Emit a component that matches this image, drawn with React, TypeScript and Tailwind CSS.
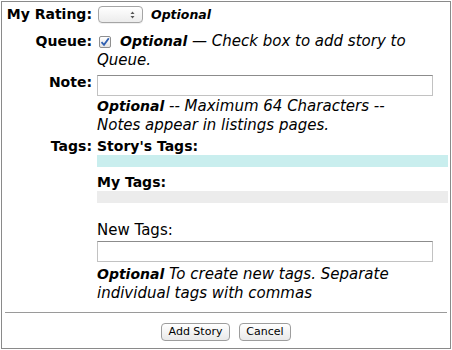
import React from 'react';

const Label: React.FC<{ children: React.ReactNode; className?: string }> = ({ children, className = '' }) => (
  <div className={`w-[90px] shrink-0 text-right text-[14px] font-bold ${className}`}>{children}</div>
);

const Opt: React.FC = () => <span className="text-[14px] font-bold">Optional</span>;

const App: React.FC = () => {
  return (
    <div className="w-[452px] h-[350px] bg-white pl-[1px] pt-[1px] font-['DejaVu_Sans',sans-serif] text-[15px] leading-[19px] text-black">
      <div className="w-[450px] h-[348px] border border-[#8a8a8a]">
        {/* my rating */}
        <div className="flex items-center pt-[3px]">
          <Label>My Rating:</Label>
          <div className="ml-[6px] flex items-center">
            <div className="relative h-[17px] w-[45px] rounded-[4px] border border-[#a5a5a5] bg-gradient-to-b from-white to-[#ececec] shadow-[0_1px_0_rgba(0,0,0,0.06)]">
              <svg className="absolute right-[7px] top-[4px]" width="5" height="8" viewBox="0 0 5 8">
                <path d="M2.5 0.5L4.5 3H0.5z" fill="#555" />
                <path d="M2.5 7.5L4.5 5H0.5z" fill="#555" />
              </svg>
            </div>
            <span className="ml-[8px] text-[12.5px] font-bold italic">Optional</span>
          </div>
        </div>

        {/* queue */}
        <div className="mt-[8px] flex items-start">
          <Label>Queue:</Label>
          <div className="ml-[5px] w-[330px] italic">
            <span className="ml-[2px] mr-[9px] inline-flex h-[12px] w-[12px] items-center justify-center rounded-[2px] border border-[#8f8f8f] bg-gradient-to-b from-white to-[#e4e4e4] align-[-1px]">
              <svg width="10" height="10" viewBox="0 0 10 10">
                <path d="M1.5 5.2L4 7.8L8.8 1.2" fill="none" stroke="#2f5fb0" strokeWidth="1.8" />
              </svg>
            </span>
            <Opt /> — Check box to add story to Queue.
          </div>
        </div>

        {/* note */}
        <div className="mt-[5px] flex items-start">
          <Label className="-mt-[2px]">Note:</Label>
          <div className="ml-[5px]">
            <input
              type="text"
              className="block h-[21px] w-[336px] border border-[#c2c2c2] border-t-[#8c8c8c] bg-white px-1 text-[13px] outline-none"
            />
            <div className="mt-[1px] w-[330px] italic">
              <Opt /> -- Maximum 64 Characters -- Notes appear in listings pages.
            </div>
          </div>
        </div>

        {/* tags */}
        <div className="mt-[3px] flex items-start">
          <Label className="leading-[17px]">Tags:</Label>
          <div className="ml-[5px] mr-[2px] flex-1">
            <div className="text-[14px] font-bold leading-[17px]">Story's Tags:</div>
            <div className="h-[12px] bg-[#c9eeee]" />
            <div className="mt-[7px] text-[14px] font-bold leading-[17px]">My Tags:</div>
            <div className="h-[12px] bg-[#ececec]" />
            <div className="mt-[18px]">New Tags:</div>
            <input
              type="text"
              className="mt-[1px] block h-[21px] w-[336px] border border-[#c2c2c2] border-t-[#8c8c8c] bg-white px-1 text-[13px] outline-none"
            />
            <div className="mt-[3px] w-[330px] italic">
              <Opt /> To create new tags. Separate individual tags with commas
            </div>
          </div>
        </div>

        <div className="mx-[3px] mt-[9px] border-t border-[#9a9a9a]" />

        <div className="mt-[10px] flex justify-center gap-[9px] text-[11px] leading-[16px]">
          <button className="h-[18px] w-[69px] rounded-[4px] border border-[#9d9d9d] bg-gradient-to-b from-white to-[#e9e9e9]">
            Add Story
          </button>
          <button className="h-[18px] w-[52px] rounded-[4px] border border-[#9d9d9d] bg-gradient-to-b from-white to-[#e9e9e9]">
            Cancel
          </button>
        </div>
      </div>
    </div>
  );
};

export default App;
